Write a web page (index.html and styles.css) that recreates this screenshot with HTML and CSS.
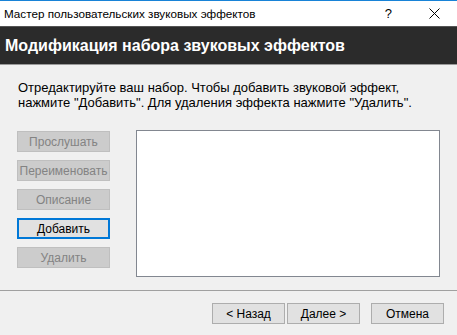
FILE: index.html
```html
<!DOCTYPE html>
<html lang="ru">
<head>
    <meta charset="UTF-8">
    <title>Мастер пользовательских звуковых эффектов</title>
    <link rel="stylesheet" href="styles.css">
</head>
<body>
    <div class="window">
        <div class="titlebar">
            <span class="title">Мастер пользовательских звуковых эффектов</span>
            <span class="help">?</span>
            <svg class="close" width="11" height="11" viewBox="0 0 11 11">
                <path d="M0.5 0.5 L10.5 10.5 M10.5 0.5 L0.5 10.5" stroke="#000" stroke-width="1" fill="none"/>
            </svg>
        </div>

        <div class="header">Модификация набора звуковых эффектов</div>

        <div class="content">
            <p class="intro">Отредактируйте ваш набор. Чтобы добавить звуковой эффект,<br>нажмите "Добавить". Для удаления эффекта нажмите "Удалить".</p>

            <div class="editor">
                <div class="actions">
                    <button class="btn" disabled>Прослушать</button>
                    <button class="btn" disabled>Переименовать</button>
                    <button class="btn" disabled>Описание</button>
                    <button class="btn focused">Добавить</button>
                    <button class="btn" disabled>Удалить</button>
                </div>
                <div class="list"></div>
            </div>
        </div>

        <div class="footer">
            <button class="btn nav">&lt; Назад</button>
            <button class="btn nav">Далее &gt;</button>
            <button class="btn nav cancel">Отмена</button>
        </div>
    </div>
</body>
</html>
```

FILE: styles.css
```css
body {
    margin: 0;
    background: #f0f0f0;
    font-family: "Liberation Sans", Arial, sans-serif;
}

.window {
    width: 457px;
    height: 335px;
    box-sizing: border-box;
    border-top: 1px solid #1883d7;
    background: #f0f0f0;
    overflow: hidden;
}

.titlebar {
    height: 25px;
    background: #fff;
    display: flex;
    align-items: center;
    padding-left: 4px;
    font-size: 11.7px;
    color: #000;
}

.title {
    flex: 1;
}

.help {
    font-size: 13px;
    margin-right: 37px;
}

.close {
    margin-right: 17px;
}

.header {
    height: 37px;
    background: #2b2b2b;
    border-top: 1px solid #555;
    color: #fff;
    font-weight: bold;
    font-size: 16px;
    line-height: 37px;
    padding-left: 5px;
    border-bottom: 1px solid #9a9a9a;
}

.content {
    height: 225px;
    padding: 15px 0 0 18px;
    box-sizing: border-box;
}

.intro {
    margin: 0;
    font-size: 13px;
    line-height: 15px;
    color: #000;
}

.editor {
    display: flex;
    margin-top: 20px;
    margin-left: -1px;
}

.actions {
    display: flex;
    flex-direction: column;
    gap: 8px;
    margin-top: 1px;
    width: 93px;
}

.btn {
    height: 21px;
    padding: 0;
    box-sizing: border-box;
    font-family: "Liberation Sans", Arial, sans-serif;
    font-size: 12px;
    background: #e1e1e1;
    border: 1px solid #adadad;
    color: #000;
}

.btn:disabled {
    background: #cccccc;
    border-color: #bfbfbf;
    color: #838383;
}

.btn.focused {
    border: 2px solid #0078d7;
}

.list {
    width: 304px;
    height: 147px;
    box-sizing: border-box;
    margin-left: 26px;
    background: #fff;
    border: 1px solid #828790;
}

.footer {
    height: 44px;
    border-top: 1px solid #a0a0a0;
    display: flex;
    align-items: flex-start;
    padding: 12px 13px 0 0;
    justify-content: flex-end;
    gap: 2px;
}

.nav {
    width: 73px;
}

.cancel {
    margin-left: 9px;
}
```
